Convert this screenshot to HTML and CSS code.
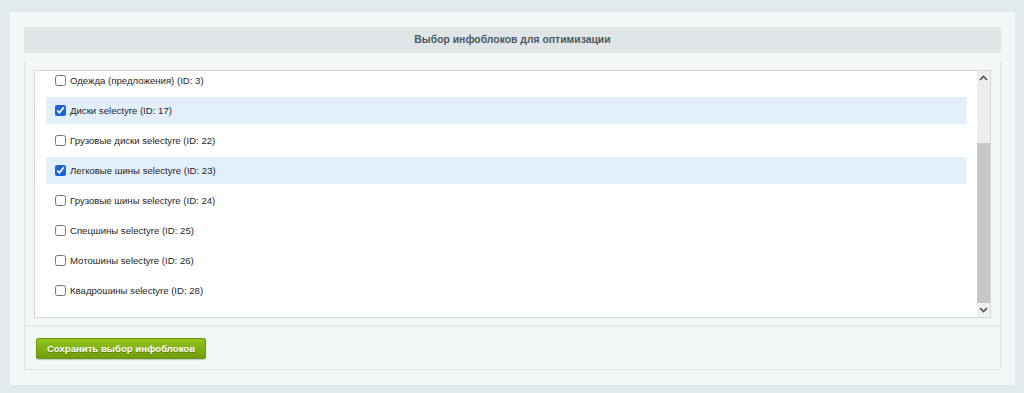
FILE: index.html
```html
<!DOCTYPE html>
<html lang="ru">
<head>
    <meta charset="UTF-8">
    <meta name="viewport" content="width=device-width, initial-scale=1.0">
    <title>Выбор инфоблоков</title>
    <link rel="stylesheet" href="styles.css">
</head>
<body>
<div class="panel">
    <div class="panel-title">Выбор инфоблоков для оптимизации</div>
    <form class="content">
        <div class="list-box">
            <div class="list">
                <label class="row"><input type="checkbox"> Одежда (предложения) (ID: 3)</label>
                <label class="row checked"><input type="checkbox" checked> Диски selectyre (ID: 17)</label>
                <label class="row"><input type="checkbox"> Грузовые диски selectyre (ID: 22)</label>
                <label class="row checked"><input type="checkbox" checked> Легковые шины selectyre (ID: 23)</label>
                <label class="row"><input type="checkbox"> Грузовые шины selectyre (ID: 24)</label>
                <label class="row"><input type="checkbox"> Спецшины selectyre (ID: 25)</label>
                <label class="row"><input type="checkbox"> Мотошины selectyre (ID: 26)</label>
                <label class="row"><input type="checkbox"> Квадрошины selectyre (ID: 28)</label>
            </div>
            <div class="scrollbar">
                <div class="scroll-btn">
                    <svg width="9" height="6" viewBox="0 0 9 6"><polyline points="1,5 4.5,1.5 8,5" fill="none" stroke="#505050" stroke-width="1.6"/></svg>
                </div>
                <div class="scroll-track">
                    <div class="scroll-thumb"></div>
                </div>
                <div class="scroll-btn down">
                    <svg width="9" height="6" viewBox="0 0 9 6"><polyline points="1,1 4.5,4.5 8,1" fill="none" stroke="#505050" stroke-width="1.6"/></svg>
                </div>
            </div>
        </div>
        <div class="actions">
            <button type="submit" class="btn-save">Сохранить выбор инфоблоков</button>
        </div>
    </form>
</div>
</body>
</html>
```

FILE: styles.css
```css
body {
    margin: 0;
    padding: 12px 9px 8px 10px;
    background-color: #e1e9ec;
    font-family: Arial, "Liberation Sans", sans-serif;
    font-size: 9.6px;
    color: #000;
}
.panel {
    background-color: #f4f7f8;
    padding: 15px 14px 15px 14px;
}
.panel-title {
    height: 26px;
    line-height: 26px;
    background-color: #e0e6e8;
    text-align: center;
    font-weight: bold;
    font-size: 10.4px;
    color: #4b5961;
    margin-bottom: 8px;
}
.content {
    margin: 0;
    padding-top: 9px;
    border: 1px solid #dfe4e6;
    border-top: none;
}
.list-box {
    margin: 0 9px 7px 9px;
    height: 246px;
    background-color: #fff;
    border: 1px solid #d4d6d7;
    display: flex;
}
.list {
    flex: 1;
    overflow: hidden;
    padding: 0 10px 0 11px;
}
.row {
    display: flex;
    align-items: center;
    height: 27px;
    margin-bottom: 3px;
    padding-left: 9px;
    color: #1f1f1f;
    cursor: pointer;
}
.row:first-child {
    margin-top: -4px;
}
.row.checked {
    background-color: #e3f0fc;
}
.row input {
    width: 11px;
    height: 11px;
    margin: 0 4px 0 0;
    accent-color: #1a66d8;
}
.scrollbar {
    width: 13px;
    display: flex;
    flex-direction: column;
    background-color: #eeeeee;
}
.scroll-btn {
    height: 14px;
    display: flex;
    align-items: center;
    justify-content: center;
}
.scroll-btn.down {
    background-color: #f1f1f1;
}
.scroll-track {
    flex: 1;
    display: flex;
    flex-direction: column;
    justify-content: flex-end;
}
.scroll-thumb {
    height: 160px;
    background-color: #c8c8c8;
}
.actions {
    border-top: 2px solid #e6eaec;
    padding: 11px 11px 10px;
}
.btn-save {
    display: block;
    width: 170px;
    height: 21px;
    padding: 0;
    border: 1px solid #6a9611;
    border-radius: 2px;
    background: linear-gradient(to bottom, #93c41c, #6f9d0d);
    box-shadow: 0 1px 1px rgba(0, 0, 0, 0.2);
    color: #fff;
    font-family: Arial, "Liberation Sans", sans-serif;
    font-size: 9.6px;
    font-weight: bold;
    white-space: nowrap;
    text-shadow: 0 1px 0 rgba(60, 90, 0, 0.6);
    cursor: pointer;
}
```
